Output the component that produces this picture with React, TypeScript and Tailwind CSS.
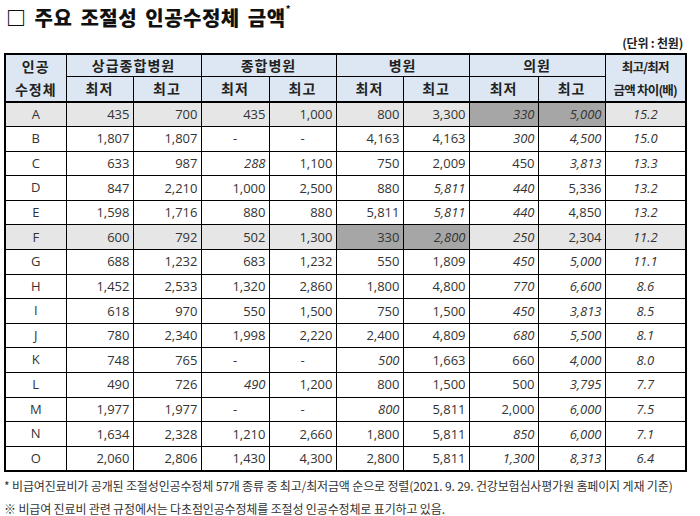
import React from 'react';

type Row = {
  name: string;
  values: string[];
  shade?: boolean;
  dark?: number[];
};

// "~" 로 시작하는 값은 기울임꼴
const rows: Row[] = [
  { name: 'A', values: ['435', '700', '435', '1,000', '800', '3,300', '~330', '~5,000', '~15.2'], shade: true, dark: [6, 7] },
  { name: 'B', values: ['1,807', '1,807', '-', '-', '4,163', '4,163', '~300', '~4,500', '~15.0'] },
  { name: 'C', values: ['633', '987', '~288', '1,100', '750', '2,009', '450', '~3,813', '~13.3'] },
  { name: 'D', values: ['847', '2,210', '1,000', '2,500', '880', '~5,811', '~440', '5,336', '~13.2'] },
  { name: 'E', values: ['1,598', '1,716', '880', '880', '5,811', '~5,811', '~440', '4,850', '~13.2'] },
  { name: 'F', values: ['600', '792', '502', '1,300', '330', '~2,800', '~250', '2,304', '~11.2'], shade: true, dark: [4, 5] },
  { name: 'G', values: ['688', '1,232', '683', '1,232', '550', '1,809', '~450', '~5,000', '~11.1'] },
  { name: 'H', values: ['1,452', '2,533', '1,320', '2,860', '1,800', '4,800', '~770', '~6,600', '~8.6'] },
  { name: 'I', values: ['618', '970', '550', '1,500', '750', '1,500', '~450', '~3,813', '~8.5'] },
  { name: 'J', values: ['780', '2,340', '1,998', '2,220', '2,400', '4,809', '~680', '~5,500', '~8.1'] },
  { name: 'K', values: ['748', '765', '-', '-', '~500', '1,663', '660', '~4,000', '~8.0'] },
  { name: 'L', values: ['490', '726', '~490', '1,200', '800', '1,500', '500', '~3,795', '~7.7'] },
  { name: 'M', values: ['1,977', '1,977', '-', '-', '~800', '5,811', '2,000', '~6,000', '~7.5'] },
  { name: 'N', values: ['1,634', '2,328', '1,210', '2,660', '1,800', '5,811', '~850', '~6,000', '~7.1'] },
  { name: 'O', values: ['2,060', '2,806', '1,430', '4,300', '2,800', '5,811', '~1,300', '~8,313', '~6.4'] },
];

const groups = ['상급종합병원', '종합병원', '병원', '의원'];

export default function App() {
  return (
    <div
      className="w-[700px] h-[516px] bg-white text-[#222] overflow-hidden"
      style={{ fontFamily: '"Open Sans", "Noto Sans CJK KR", sans-serif' }}
    >
      {/* 제목 */}
      <div className="pl-[6px] pt-[2px] h-[34px] flex items-center">
        <h1
          className="text-[20px] font-black tracking-[0.5px] [word-spacing:3px] text-[#111] leading-none"
          style={{ fontFamily: '"Noto Sans CJK KR", sans-serif' }}
        >
          □ 주요 조절성 인공수정체 금액<sup className="text-[9px] align-top relative top-[1px]">*</sup>
        </h1>
      </div>

      <div className="flex justify-end pr-[17px] h-[17px] items-center">
        <span
          className="text-[12px] font-bold tracking-[-0.2px] text-[#222]"
          style={{ fontFamily: '"Noto Sans CJK KR", sans-serif' }}
        >
          (단위 : 천원)
        </span>
      </div>

      {/* 표 */}
      <div className="pl-[4px] pt-[2px]">
        <table className="table-fixed border-collapse border-2 border-black w-[681px] text-[13px]">
          <colgroup>
            <col className="w-[61px]" />
            <col className="w-[67px]" />
            <col className="w-[68px]" />
            <col className="w-[68px]" />
            <col className="w-[67px]" />
            <col className="w-[67px]" />
            <col className="w-[66px]" />
            <col className="w-[69px]" />
            <col className="w-[67px]" />
            <col className="w-[81px]" />
          </colgroup>
          <thead
            className="bg-[#dde7f3] font-bold text-[14px] text-[#222]"
            style={{ fontFamily: '"Noto Sans CJK KR", sans-serif' }}
          >
            <tr className="h-[22px]">
              <th rowSpan={2} className="border border-black border-b-2 leading-[23px] tracking-[1px]">
                인공
                <br />
                수정체
              </th>
              {groups.map((g) => (
                <th key={g} colSpan={2} className="border border-black tracking-[1px] leading-none">
                  {g}
                </th>
              ))}
              <th rowSpan={2} className="border border-black border-b-2 text-[12.5px] leading-[23px] tracking-[-0.8px]">
                최고/최저
                <br />
                금액 차이(배)
              </th>
            </tr>
            <tr className="h-[26px]">
              {groups.map((g) => (
                <React.Fragment key={g}>
                  <th className="border border-black border-b-2 tracking-[1px]">최저</th>
                  <th className="border border-black border-b-2 tracking-[1px]">최고</th>
                </React.Fragment>
              ))}
            </tr>
          </thead>
          <tbody className="text-[#333]">
            {rows.map((r) => (
              <tr key={r.name} className={`h-[24.6px] ${r.shade ? 'bg-[#e6e6e6]' : 'bg-white'}`}>
                <td className="border border-black text-center">{r.name}</td>
                {r.values.map((v, i) => {
                  const italic = v.startsWith('~');
                  const text = italic ? v.slice(1) : v;
                  const dark = r.dark?.includes(i);
                  const last = i === r.values.length - 1;
                  const align = last || text === '-' ? 'text-center' : 'text-right pr-[3px]';
                  return (
                    <td
                      key={i}
                      className={`border border-black leading-none ${align} ${italic ? 'italic' : ''} ${dark ? 'bg-[#a6a6a6]' : ''}`}
                    >
                      {text}
                    </td>
                  );
                })}
              </tr>
            ))}
          </tbody>
        </table>
      </div>

      {/* 주석 */}
      <div
        className="pl-[4px] pt-[2px] text-[12px] text-[#333] tracking-[-0.15px] leading-[23px]"
        style={{ fontFamily: '"Noto Sans CJK KR", sans-serif' }}
      >
        <p className="whitespace-nowrap">* 비급여진료비가 공개된 조절성인공수정체 57개 종류 중 최고/최저금액 순으로 정렬(2021. 9. 29. 건강보험심사평가원 홈페이지 게재 기준)</p>
        <p className="whitespace-nowrap">※ 비급여 진료비 관련 규정에서는 다초점인공수정체를 조절성 인공수정체로 표기하고 있음.</p>
      </div>
    </div>
  );
}
